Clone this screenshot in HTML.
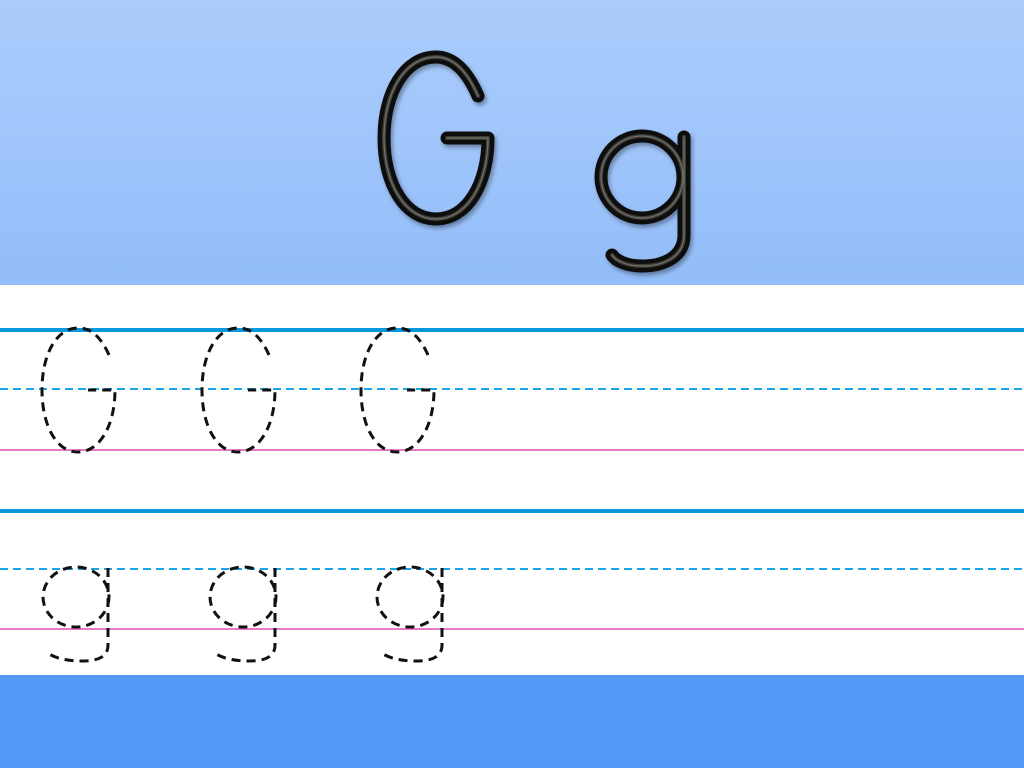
<!DOCTYPE html>
<html><head><meta charset="utf-8"><style>html,body{margin:0;padding:0;width:1024px;height:768px;overflow:hidden}</style></head>
<body>
<svg width="1024" height="768" viewBox="0 0 1024 768" xmlns="http://www.w3.org/2000/svg">
<defs>
<linearGradient id="bg" x1="0" y1="0" x2="0" y2="1">
<stop offset="0" stop-color="#abcdfc"/><stop offset="1" stop-color="#93bdf9"/>
</linearGradient>
<filter id="sh" x="-20%" y="-20%" width="140%" height="140%"><feDropShadow dx="2" dy="3" stdDeviation="2" flood-color="#000" flood-opacity="0.35"/></filter>
</defs>
<rect width="1024" height="285" fill="url(#bg)"/>
<rect y="285" width="1024" height="390" fill="#fff"/>
<rect y="675" width="1024" height="93" fill="#5498f5"/>
<g fill="none" stroke-linecap="round" stroke-linejoin="round" filter="url(#sh)">
<path d="M478,96 C465,66 450,57 436,57 C405,57 384,92 384,138 C384,184 405,219 436,219 C467,219 488,184 488,138 L447,138" stroke="#111" stroke-width="13"/>
<path d="M684,137 L684,235 C684,258 662,266 642,266 C627,266 616,261 612,255" stroke="#111" stroke-width="13"/>
<circle cx="642" cy="177" r="41" stroke="#111" stroke-width="13"/>
</g>
<g fill="none" stroke-linecap="round" stroke-linejoin="round" stroke="#3b3b35" stroke-width="4">
<path d="M478,96 C465,66 450,57 436,57 C405,57 384,92 384,138 C384,184 405,219 436,219 C467,219 488,184 488,138 L447,138"/>
<path d="M684,137 L684,235 C684,258 662,266 642,266 C627,266 616,261 612,255"/>
<circle cx="642" cy="177" r="41"/>
</g>
<g fill="none" stroke-linecap="round" stroke-linejoin="round" stroke="#8a8a82" stroke-width="1.2" opacity="0.7">
<path d="M478,96 C465,66 450,57 436,57 C405,57 384,92 384,138 C384,184 405,219 436,219 C467,219 488,184 488,138 L447,138"/>
<path d="M684,137 L684,235 C684,258 662,266 642,266 C627,266 616,261 612,255"/>
<circle cx="642" cy="177" r="41"/>
</g>
<rect y="328" width="1024" height="4" fill="#0b97dc"/>
<line x1="0" y1="389" x2="1024" y2="389" stroke="#19a6e6" stroke-width="2" stroke-dasharray="8,5"/>
<rect y="449" width="1024" height="2" fill="#e879c8"/>
<rect y="509" width="1024" height="4" fill="#0b97dc"/>
<line x1="0" y1="569" x2="1024" y2="569" stroke="#19a6e6" stroke-width="2" stroke-dasharray="8,5"/>
<rect y="628" width="1024" height="2" fill="#e879c8"/>
<g fill="none" stroke="#111" stroke-width="3" stroke-dasharray="9,6">
<g id="G"><path d="M109,355 C100,335 90,328 78,328 C56,328 42,355 42,390 C42,425 56,452 78,452 C100,452 115,425 115,390 L88,390"/></g>
<use href="#G" x="160"/><use href="#G" x="319"/>
<g id="g"><ellipse cx="76" cy="597" rx="33" ry="30"/><path d="M108,568 L108,645 C108,657 98,661 82,661 C66,661 56,658 49,654"/></g>
<use href="#g" x="167"/><use href="#g" x="334"/>
</g>
</svg>
</body></html>
